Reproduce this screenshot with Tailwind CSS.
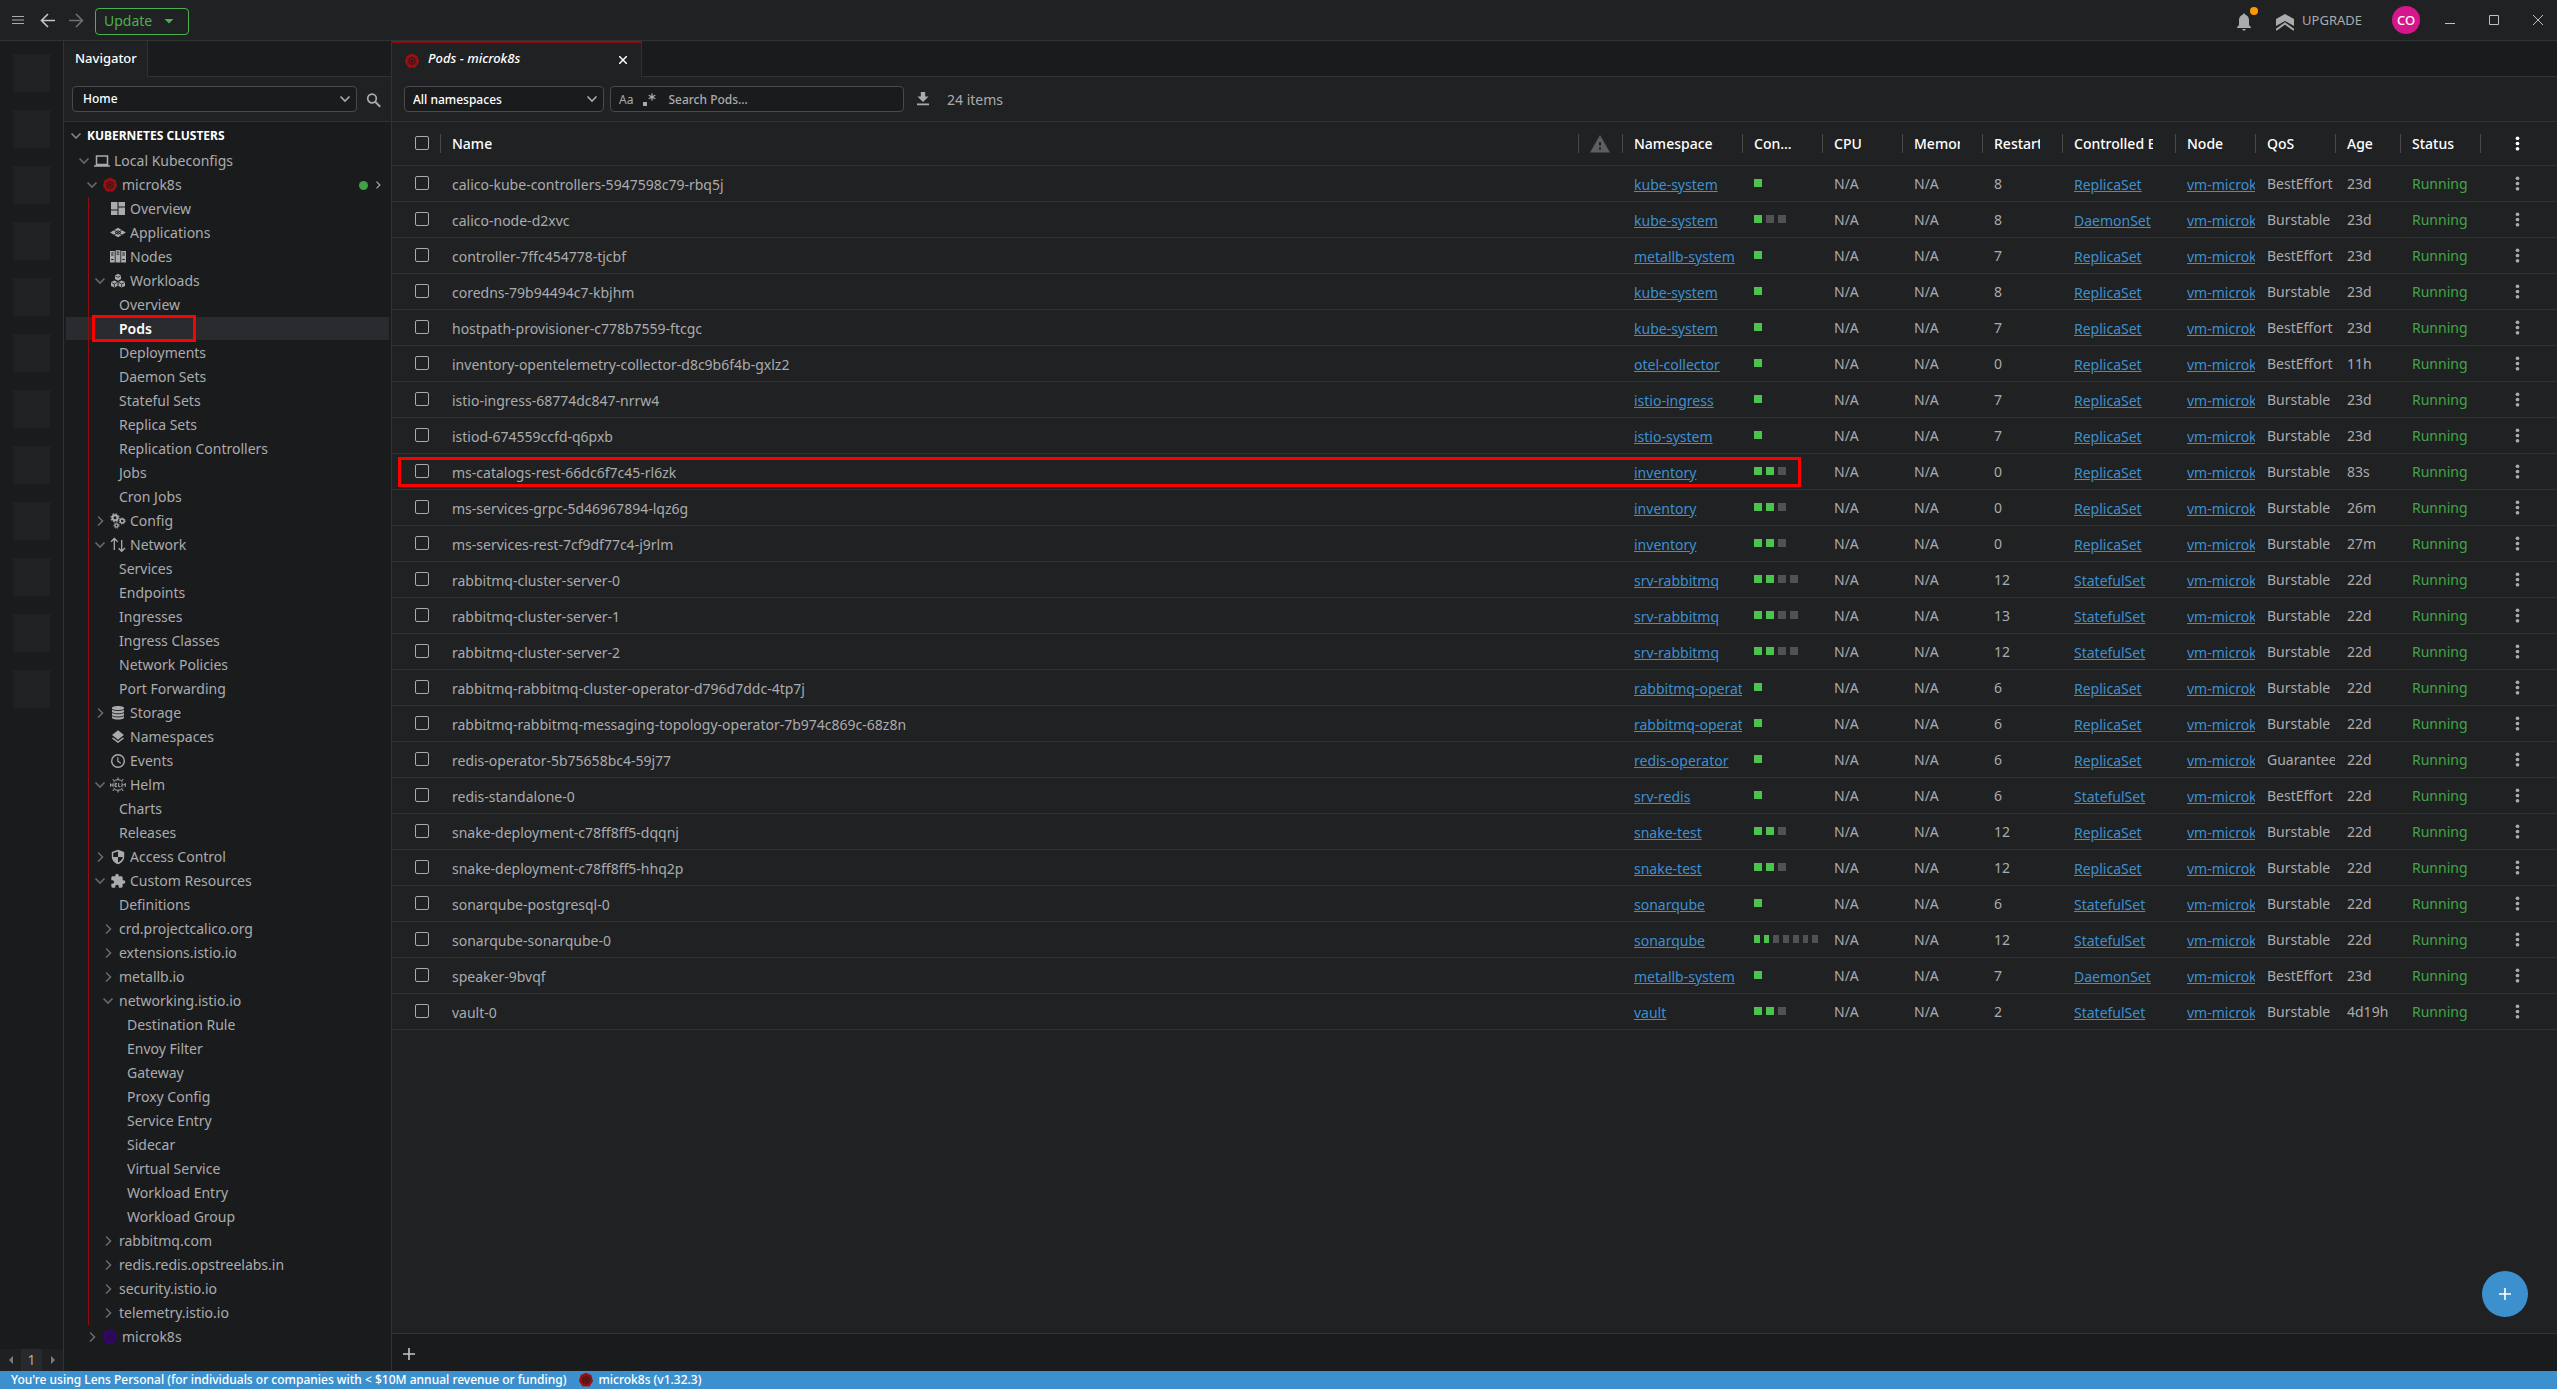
<!DOCTYPE html>
<html lang="en">
<head>
    <meta charset="UTF-8">
    <meta name="viewport" content="width=device-width, initial-scale=1.0">
    <title>Pods - microk8s</title>
    <script src="https://cdn.jsdelivr.net/npm/@tailwindcss/browser@4"></script>
</head>
<body class="bg-[#202123] text-[#aaabad] text-sm font-['Noto_Sans',sans-serif]">
    <!-- shared icons -->
    <svg class="hidden">
        <symbol id="i-down" viewBox="0 0 16 16"><path d="M3.5 5.5 8 10l4.5-4.5" fill="none" stroke="currentColor" stroke-width="1.6"/></symbol>
        <symbol id="i-right" viewBox="0 0 16 16"><path d="M6 3.500 10.500 8 6 12.500" fill="none" stroke="currentColor" stroke-width="1.6"/></symbol>
        <symbol id="i-laptop" viewBox="0 0 16 16"><path d="M2.500 3h11v8.500h-11zM0 13h16" fill="none" stroke="currentColor" stroke-width="1.5"/></symbol>
        <symbol id="i-k8s" viewBox="0 0 16 16">
            <path d="M8 1.500 12.800 3.700 14.200 9 11 13.800H5L1.800 9 3.200 3.700Z" fill="currentColor" stroke="currentColor" stroke-width="1.500" stroke-linejoin="round"/>
            <g fill="none" stroke="#1a1b1d" stroke-opacity=".7"><circle cx="8" cy="8" r="3.300"/><path d="M8 2.800v10.400M3 6.200l10 3.600M3 9.800l10-3.600M4.800 3.900l6.400 8.200M11.200 3.900l-6.400 8.200" stroke-width=".7"/></g>
        </symbol>
        <symbol id="i-dash" viewBox="0 0 16 16"><path d="M1 1h6.500v7.500H1zM8.500 1H15v4.500H8.500zM1 9.500h6.500V14H1zM8.500 6.500H15V14H8.500z" fill="currentColor"/></symbol>
        <symbol id="i-apps" viewBox="0 0 16 16"><path d="M8 2.700 15.800 7.500 8 12.300.2 7.500Z" fill="currentColor"/><path d="M4.200 5.100l7.700 4.900M11.800 5.100 4.100 10M8 5.700l2.800 1.800L8 9.300 5.200 7.500Z" stroke="#1a1b1d" stroke-width=".9" fill="none"/></symbol>
        <symbol id="i-nodes" viewBox="0 0 16 16"><path d="M0 2h4.800v11.500H0zM5.600 1.200h4.800v12.300H5.600zM11.200 2H16v11.500h-4.800z" fill="currentColor"/><path d="M1.200 4h2.400M1.200 6h2.400M1.200 10.500h2.400M6.800 3.200h2.400M6.800 5.200h2.400M12.400 4h2.400M12.400 6h2.400M12.400 10.500h2.400" stroke="#1a1b1d"/></symbol>
        <symbol id="i-work" viewBox="0 0 16 16"><path d="M8 .8l3 1.700v3.600L8 7.800 5 6.100V2.500zM4.300 7.400l3.200 1.700v3.800l-3.200 1.700L1 12.900V9.100zM11.700 7.400 15 9.100v3.800l-3.300 1.700-3.200-1.700V9.100z" fill="currentColor"/><path d="M5.500 3 8 4.300 10.500 3M1.500 9.500l2.800 1.400 2.800-1.400M8.900 9.500l2.800 1.400 2.800-1.400M4.300 11v3M11.700 11v3" stroke="#1a1b1d" stroke-width=".8" fill="none"/></symbol>
        <symbol id="i-config" viewBox="0 0 16 16"><g fill="none" stroke="currentColor"><circle cx="5" cy="4.800" r="2.500" stroke-width="2"/><circle cx="5" cy="4.800" r="4" stroke-width="1.200" stroke-dasharray="1.600 1.550"/><circle cx="12.200" cy="8" r="2" stroke-width="1.500"/><circle cx="12.200" cy="8" r="3" stroke-width="1" stroke-dasharray="1.200 1.150"/><circle cx="6.500" cy="12.500" r="1.600" stroke-width="1.400"/><circle cx="6.500" cy="12.500" r="2.600" stroke-width="1" stroke-dasharray="1.200 1.150"/></g></symbol>
        <symbol id="i-net" viewBox="0 0 16 16"><path d="M4.300 13V1.800M1 4.800l3.300-3.300 3.300 3.300M11.700 3v11.200M8.600 11.200l3.100 3.100 3.300-3.300" fill="none" stroke="currentColor" stroke-width="1.300"/></symbol>
        <symbol id="i-disk" viewBox="0 0 16 16"><path d="M2 3c0-2.700 12-2.700 12 0v9.500c0 2.700-12 2.700-12 0z" fill="currentColor"/><path d="M2 4.200c1.500 1.800 10.500 1.800 12 0M2 7.400c1.500 1.800 10.500 1.800 12 0M2 10.600c1.500 1.800 10.500 1.800 12 0" fill="none" stroke="#1a1b1d" stroke-width=".9"/></symbol>
        <symbol id="i-layers" viewBox="0 0 24 24"><path d="m11.990 18.540-7.370-5.730L3 14.070l9 7 9-7-1.630-1.270-7.380 5.740zM12 16l7.360-5.730L21 9l-9-7-9 7 1.630 1.270L12 16z" fill="currentColor"/></symbol>
        <symbol id="i-clock" viewBox="0 0 16 16"><circle cx="8" cy="8" r="6.300" fill="none" stroke="currentColor" stroke-width="1.400"/><path d="M7.800 4.300v4l3 2" fill="none" stroke="currentColor" stroke-width="1.200"/></symbol>
        <symbol id="i-helm" viewBox="0 0 16 16"><g fill="none" stroke="currentColor" stroke-width="1"><path d="M3.500 5a5.500 5.500 0 0 1 9 0M3.500 11a5.500 5.500 0 0 0 9 0M8 .5v2.300M8 13.200v2.300M2.800 2l1.500 2M13.200 2l-1.500 2M2.800 14l1.500-2M13.200 14l-1.500-2M.6 6.300v3.500M3 6.300v3.500M.6 8H3M7 6.300H5v3.400h2M5 8h1.700M8.700 6v3.700h1.800M12 9.900V6.500l1.600 1.800 1.700-1.800v3.400"/></g></symbol>
        <symbol id="i-shield" viewBox="0 0 16 16"><path d="M8 .8 14.200 3v4.500c0 3.500-2.500 6.500-6.200 7.700-3.700-1.200-6.200-4.200-6.200-7.700V3z" fill="currentColor"/><path d="M8 2.500V8H3.200V4zM8 8h4.800c-.4 2.500-2.300 4.600-4.800 5.500z" fill="#1a1b1d"/></symbol>
        <symbol id="i-puzzle" viewBox="0 0 24 24"><path d="M20.500 11H19V7c0-1.100-.9-2-2-2h-4V3.500a2.500 2.500 0 0 0-5 0V5H4c-1.100 0-2 .9-2 2v3.800h1.500a2.700 2.700 0 0 1 0 5.400H2V20c0 1.100.9 2 2 2h3.800v-1.500a2.700 2.700 0 0 1 5.400 0V22H17c1.100 0 2-.9 2-2v-4h1.500a2.500 2.500 0 0 0 0-5z" fill="currentColor"/></symbol>
        <symbol id="i-dots" viewBox="0 0 24 24"><g fill="currentColor"><circle cx="12" cy="6" r="2.100"/><circle cx="12" cy="12" r="2.100"/><circle cx="12" cy="18" r="2.100"/></g></symbol>
    </svg>

    <div class="h-screen flex flex-col overflow-hidden">
        <!-- title bar -->
        <header class="h-[41px] shrink-0 border-b border-[#303234] flex items-center justify-between">
            <div class="flex items-center pl-3">
                <button class="w-3" aria-label="Menu"><svg class="w-3 h-3" viewBox="0 0 12 12"><path d="M0 2.500h12M0 6h12M0 9.500h12" stroke="currentColor"/></svg></button>
                <button class="ml-4" aria-label="Back"><svg class="w-4 h-4" viewBox="0 0 16 16"><path d="M15 8.500H1.500M8 2 1.500 8.500 8 15" fill="none" stroke="#c4c5c7" stroke-width="1.600"/></svg></button>
                <button class="ml-3 text-[#6e7073]" aria-label="Forward"><svg class="w-4 h-4" viewBox="0 0 16 16"><path d="M1 8.500h13.500M8 2l6.500 6.500L8 15" fill="none" stroke="currentColor" stroke-width="1.600"/></svg></button>
                <button class="ml-[11px] mt-0.5 h-[27px] w-[94px] pl-2 border border-[#4caf50] rounded text-[#4caf50] flex items-center">
                    Update
                    <svg class="ml-3 w-2.5 h-2.5" viewBox="0 0 10 10"><path d="M.5 3h9L5 7.500z" fill="currentColor"/></svg>
                </button>
            </div>
            <div class="flex items-center pr-[14px]">
                <button class="relative mt-1" aria-label="Notifications">
                    <svg class="w-5 h-5" viewBox="0 0 20 20"><path d="M10 1.500c.9 0 1.300.6 1.300 1.300 2.400.7 3.700 2.700 3.700 5.200v5l2 2.300v.7H3v-.7L5 13V8c0-2.500 1.300-4.500 3.700-5.200 0-.7.4-1.300 1.300-1.300zM8.300 17h3.400c0 1-.7 1.600-1.700 1.600S8.300 18 8.300 17z" fill="currentColor"/></svg>
                    <span class="absolute -top-[5px] -right-1 w-2 h-2 rounded-full bg-[#ff9800]"></span>
                </button>
                <button class="ml-[22px] flex items-center gap-2 text-[13px]">
                    <svg class="mt-1 w-[18px] h-[18px]" viewBox="0 0 18 18"><path d="M9 1l9 5v7l-9-5-9 5V6z" fill="currentColor"/><path d="M0 17l9-6.500 9 6.500" fill="none" stroke="currentColor" stroke-width="2"/></svg>
                    UPGRADE
                </button>
                <button class="ml-[30px] w-7 h-7 rounded-full bg-[#d6168c] text-white text-[13px] font-medium">CO</button>
                <button class="ml-[25px]" aria-label="Minimize"><svg class="w-2.5 h-2.5" viewBox="0 0 10 10"><path d="M0 8.500h10" stroke="#c0c0c0"/></svg></button>
                <button class="ml-[34px]" aria-label="Maximize"><svg class="w-2.5 h-2.5" viewBox="0 0 10 10"><path d="M.5.5h9v9h-9z" fill="none" stroke="#c0c0c0"/></svg></button>
                <button class="ml-[34px]" aria-label="Close"><svg class="w-2.5 h-2.5" viewBox="0 0 10 10"><path d="M0 0l10 10M10 0 0 10" stroke="#c0c0c0"/></svg></button>
            </div>
        </header>

        <div class="flex-1 min-h-0 flex">
            <!-- hotbar -->
            <div class="w-16 shrink-0 bg-[#1a1b1d] border-r border-[#303234] flex flex-col justify-between">
                <div id="hotbar" class="pt-[13px] pl-[13px] flex flex-col gap-[18px]"></div>
                <div class="h-[22px] flex items-stretch bg-[#1f2022] text-sm">
                    <button class="w-[21px] flex items-center justify-center text-[#7a7c7e]" aria-label="Previous"><svg class="w-2 h-2" viewBox="0 0 8 8"><path d="M6 0v8L2 4z" fill="currentColor"/></svg></button>
                    <span class="w-[21px] bg-[#27292c] text-center leading-[21px]">1</span>
                    <button class="w-[21px] flex items-center justify-center text-[#7a7c7e]" aria-label="Next"><svg class="w-2 h-2" viewBox="0 0 8 8"><path d="M2 0v8l4-4z" fill="currentColor"/></svg></button>
                </div>
            </div>

            <!-- navigator -->
            <aside class="w-[328px] shrink-0 bg-[#1a1b1d] border-r border-[#303234] flex flex-col">
                <div class="h-9 shrink-0 flex">
                    <div class="w-[84px] bg-[#202123] border-r border-[#303234] pl-[11px] text-[13px] leading-[34px] font-medium text-white">Navigator</div>
                    <div class="flex-1 border-b border-[#303234]"></div>
                </div>
                <div class="h-[45px] shrink-0 bg-[#202123] border-b border-[#303234] flex items-center pl-2">
                    <div class="relative w-[285px]">
                        <select aria-label="View" class="appearance-none w-full h-[26px] bg-[#1a1b1d] border border-[#47494c] rounded pl-2.5 text-xs font-medium text-white"><option>Home</option></select>
                        <svg class="absolute right-1 top-[5px] w-4 h-4"><use href="#i-down"/></svg>
                    </div>
                    <button class="ml-[9px] mt-0.5" aria-label="Search"><svg class="w-4 h-4" viewBox="0 0 16 16"><circle cx="6" cy="6.500" r="4.300" fill="none" stroke="currentColor" stroke-width="1.700"/><path d="M9.200 9.700l5 5" stroke="currentColor" stroke-width="2"/></svg></button>
                </div>
                <nav class="flex-1 min-h-0 overflow-hidden">
                    <div class="h-[27px] flex items-center pl-1 gap-[3px]">
                        <svg class="w-4 h-4 text-[#808284]"><use href="#i-down"/></svg>
                        <h2 class="text-xs font-bold text-white">KUBERNETES CLUSTERS</h2>
                    </div>
                    <div id="tree"></div>
                </nav>
            </aside>

            <!-- main area -->
            <main class="flex-1 min-w-0 flex flex-col relative">
                <div class="h-9 shrink-0 flex bg-[#1a1b1d]">
                    <div class="w-[250px] bg-[#202123] border-t-2 border-t-[#8e0e10] border-r border-r-[#303234] flex items-center pl-3 pr-3.5">
                        <svg class="w-4 h-4 mt-0.5 text-[#a01012]"><use href="#i-k8s"/></svg>
                        <span class="ml-2 mb-1 flex-1 text-[13px] italic font-medium text-white">Pods - microk8s</span>
                        <button class="text-white" aria-label="Close tab"><svg class="w-2 h-2" viewBox="0 0 8 8"><path d="M0 0l8 8M8 0 0 8" stroke="currentColor" stroke-width="1.500"/></svg></button>
                    </div>
                    <div class="flex-1 border-b border-[#303234]"></div>
                </div>
                <div class="h-[45px] shrink-0 border-b border-[#303234] flex items-center pl-3">
                    <div class="relative w-[200px]">
                        <select aria-label="Namespace" class="appearance-none w-full h-[26px] pt-px bg-[#1a1b1d] border border-[#47494c] rounded pl-2 text-xs font-medium text-white"><option>All namespaces</option></select>
                        <svg class="absolute right-1 top-[5px] w-4 h-4"><use href="#i-down"/></svg>
                    </div>
                    <div class="ml-1.5 w-[294px] h-[26px] pt-px bg-[#1a1b1d] border border-[#47494c] rounded flex items-center pl-2">
                        <button class="text-xs" aria-label="Match case">Aa</button>
                        <button class="ml-2.5" aria-label="Use regular expression"><svg class="w-3.5 h-3.5" viewBox="0 0 14 14"><path d="M0 9h4v4H0z" fill="currentColor"/><path d="M9 .5v7M5.700 2.300l6.600 3.500M12.300 2.300 5.700 5.800" stroke="currentColor" stroke-width="1.300"/></svg></button>
                        <input type="text" aria-label="Search pods" placeholder="Search Pods..." class="ml-[11px] flex-1 min-w-0 bg-transparent outline-none text-xs font-medium placeholder:text-[#aaabad]">
                    </div>
                    <button class="ml-3" aria-label="Download"><svg class="w-3.5 h-3.5" viewBox="0 0 14 14"><path d="M4.800 0h4.400v4.500h3.300L7 10 1.500 4.500h3.300zM1 11.500h12v1.800H1z" fill="currentColor"/></svg></button>
                    <span class="ml-[17px] pt-0.5">24 items</span>
                </div>

                <div class="flex-1 min-h-0 overflow-hidden">
                    <table class="w-full table-fixed border-separate border-spacing-0 whitespace-nowrap [&_td]:border-b [&_th]:border-b [&_td]:border-[#2f3133] [&_th]:border-[#2f3133]">
                        <colgroup>
                            <col class="w-12"><col><col class="w-11"><col class="w-[120px]"><col class="w-20"><col class="w-20"><col class="w-20"><col class="w-20"><col class="w-[113px]"><col class="w-20"><col class="w-20"><col class="w-[65px]"><col class="w-20"><col class="w-[77px]">
                        </colgroup>
                        <thead>
                            <tr id="head"></tr>
                        </thead>
                        <tbody id="pods"></tbody>
                    </table>
                </div>

                <button class="absolute right-[29px] bottom-[54px] w-[46px] h-[46px] rounded-full bg-[#3d90ce] text-white flex items-center justify-center" aria-label="Create resource">
                    <svg class="w-3 h-3" viewBox="0 0 12 12"><path d="M6 0v12M0 6h12" stroke="currentColor" stroke-width="1.600"/></svg>
                </button>

                <!-- dock -->
                <div class="h-[38px] shrink-0 bg-[#1a1b1d] border-t border-[#303234] flex items-center pl-[11px]">
                    <button class="mt-0.5" aria-label="New tab"><svg class="w-3 h-3" viewBox="0 0 12 12"><path d="M6 0v12M0 6h12" stroke="#c4c5c7" stroke-width="1.600"/></svg></button>
                </div>
            </main>
        </div>

        <footer class="h-[18px] shrink-0 bg-[#3d90ce] text-white text-xs leading-[18px] font-medium flex items-center pl-[11px]">
            <span>You're using Lens Personal (for individuals or companies with &lt; $10M annual revenue or funding)</span>
            <svg class="ml-3 w-4 h-4 text-[#a01012]"><use href="#i-k8s"/></svg>
            <span class="ml-1">microk8s (v1.32.3)</span>
        </footer>
    </div>

    <script>
        // level, chevron (d = open, r = closed, '' = none), icon, label
        const tree = [
            [0, 'd', 'laptop', 'Local Kubeconfigs'],
            [1, 'd', 'k8s', 'microk8s'],
            [2, '', 'dash', 'Overview'],
            [2, '', 'apps', 'Applications'],
            [2, '', 'nodes', 'Nodes'],
            [2, 'd', 'work', 'Workloads'],
            [3, '', '', 'Overview'],
            [3, '', '', 'Pods'],
            [3, '', '', 'Deployments'],
            [3, '', '', 'Daemon Sets'],
            [3, '', '', 'Stateful Sets'],
            [3, '', '', 'Replica Sets'],
            [3, '', '', 'Replication Controllers'],
            [3, '', '', 'Jobs'],
            [3, '', '', 'Cron Jobs'],
            [2, 'r', 'config', 'Config'],
            [2, 'd', 'net', 'Network'],
            [3, '', '', 'Services'],
            [3, '', '', 'Endpoints'],
            [3, '', '', 'Ingresses'],
            [3, '', '', 'Ingress Classes'],
            [3, '', '', 'Network Policies'],
            [3, '', '', 'Port Forwarding'],
            [2, 'r', 'disk', 'Storage'],
            [2, '', 'layers', 'Namespaces'],
            [2, '', 'clock', 'Events'],
            [2, 'd', 'helm', 'Helm'],
            [3, '', '', 'Charts'],
            [3, '', '', 'Releases'],
            [2, 'r', 'shield', 'Access Control'],
            [2, 'd', 'puzzle', 'Custom Resources'],
            [3, '', '', 'Definitions'],
            [3, 'r', '', 'crd.projectcalico.org'],
            [3, 'r', '', 'extensions.istio.io'],
            [3, 'r', '', 'metallb.io'],
            [3, 'd', '', 'networking.istio.io'],
            [4, '', '', 'Destination Rule'],
            [4, '', '', 'Envoy Filter'],
            [4, '', '', 'Gateway'],
            [4, '', '', 'Proxy Config'],
            [4, '', '', 'Service Entry'],
            [4, '', '', 'Sidecar'],
            [4, '', '', 'Virtual Service'],
            [4, '', '', 'Workload Entry'],
            [4, '', '', 'Workload Group'],
            [3, 'r', '', 'rabbitmq.com'],
            [3, 'r', '', 'redis.redis.opstreelabs.in'],
            [3, 'r', '', 'security.istio.io'],
            [3, 'r', '', 'telemetry.istio.io'],
            [1, 'r', 'k8s', 'microk8s'],
        ];
        const indent = ['pl-3', 'pl-5', 'pl-7', 'pl-9', 'pl-11'];

        function treeRow([level, chevron, icon, label], index) {
            const selected = label === 'Pods';
            const iconColor = icon !== 'k8s' ? '' : index === 1 ? 'text-[#a01012]' : 'text-[#3a0078]';
            return `
                <a href="#" class="relative h-6 flex items-center ${indent[level]} ${selected ? 'text-white font-semibold' : ''}">
                    ${selected ? '<span class="absolute inset-x-0.5 top-0 bottom-px bg-[#2a2b2e] -z-10"></span>' : ''}
                    <span class="w-4 h-4 text-[#66686b]">${chevron ? `<svg class="w-4 h-4"><use href="#${chevron === 'd' ? 'i-down' : 'i-right'}"/></svg>` : ''}</span>
                    ${icon ? `<svg class="ml-0.5 w-4 h-4 ${iconColor}"><use href="#i-${icon}"/></svg><span class="ml-1">${label}</span>` : `<span class="ml-[3px]">${label}</span>`}
                    ${index === 1 ? '<span class="ml-auto w-[9px] h-[9px] rounded-full bg-[#43a047]"></span><svg class="ml-1 mr-[7px] w-3 h-3"><use href="#i-right"/></svg>' : ''}
                    ${selected ? '<span class="absolute left-7 -top-0.5 w-[104px] h-[27px] border-3 border-[#ff0000]"></span>' : ''}
                </a>`;
        }

        document.getElementById('tree').innerHTML = `
            <div class="relative z-0">
                ${tree.slice(0, 2).map(treeRow).join('')}
                <div class="relative">
                    <span class="absolute left-6 inset-y-0 w-px bg-[#8e0e10]"></span>
                    ${tree.slice(2, -1).map((r) => treeRow(r, 2)).join('')}
                </div>
                ${treeRow(tree[tree.length - 1], 99)}
            </div>`;

        document.getElementById('hotbar').innerHTML = '<div class="w-[37px] h-[38px] bg-[#202123]"></div>'.repeat(12);

        const warning = '<svg class="w-5 h-[18px] text-[#5c5f62]" viewBox="0 0 20 18"><path d="M10 0l10 17.500H0z" fill="currentColor"/><path d="M9 7h2v3.500H9zM9 12.500h2v2H9z" fill="#202123"/></svg>';
        const columns = ['Name', warning, 'Namespace', 'Con...', 'CPU', 'Memory', 'Restarts', 'Controlled By', 'Node', 'QoS', 'Age', 'Status'];
        const box = 'appearance-none block w-3.5 h-3.5 ml-[23px] border border-[#aaabad] rounded-xs';
        const dots = '<svg class="w-[21px] h-[21px]"><use href="#i-dots"/></svg>';

        document.getElementById('head').innerHTML = `
            <th class="h-11 p-0 pb-0.5"><input type="checkbox" aria-label="Select all pods" class="${box}"></th>
            ${columns.map((c) => `
            <th class="p-0 font-medium text-white text-left">
                <div class="flex items-center pr-[22px]">
                    <span class="w-px h-[19px] mr-[11px] shrink-0 bg-[#47494c]"></span>
                    <span class="${c === warning ? '' : 'overflow-hidden'}">${c}</span>
                </div>
            </th>`).join('')}
            <th class="p-0 text-white">
                <div class="flex items-center"><span class="w-px h-[19px] mr-[26px] bg-[#47494c]"></span><button aria-label="Columns" class="block">${dots}</button></div>
            </th>`;

        // name, namespace, containers ready/total, restarts, owner, qos, age
        const pods = [
            ['calico-kube-controllers-5947598c79-rbq5j', 'kube-system', 1, 1, 8, 'ReplicaSet', 'BestEffort', '23d'],
            ['calico-node-d2xvc', 'kube-system', 1, 3, 8, 'DaemonSet', 'Burstable', '23d'],
            ['controller-7ffc454778-tjcbf', 'metallb-system', 1, 1, 7, 'ReplicaSet', 'BestEffort', '23d'],
            ['coredns-79b94494c7-kbjhm', 'kube-system', 1, 1, 8, 'ReplicaSet', 'Burstable', '23d'],
            ['hostpath-provisioner-c778b7559-ftcgc', 'kube-system', 1, 1, 7, 'ReplicaSet', 'BestEffort', '23d'],
            ['inventory-opentelemetry-collector-d8c9b6f4b-gxlz2', 'otel-collector', 1, 1, 0, 'ReplicaSet', 'BestEffort', '11h'],
            ['istio-ingress-68774dc847-nrrw4', 'istio-ingress', 1, 1, 7, 'ReplicaSet', 'Burstable', '23d'],
            ['istiod-674559ccfd-q6pxb', 'istio-system', 1, 1, 7, 'ReplicaSet', 'Burstable', '23d'],
            ['ms-catalogs-rest-66dc6f7c45-rl6zk', 'inventory', 2, 3, 0, 'ReplicaSet', 'Burstable', '83s'],
            ['ms-services-grpc-5d46967894-lqz6g', 'inventory', 2, 3, 0, 'ReplicaSet', 'Burstable', '26m'],
            ['ms-services-rest-7cf9df77c4-j9rlm', 'inventory', 2, 3, 0, 'ReplicaSet', 'Burstable', '27m'],
            ['rabbitmq-cluster-server-0', 'srv-rabbitmq', 2, 4, 12, 'StatefulSet', 'Burstable', '22d'],
            ['rabbitmq-cluster-server-1', 'srv-rabbitmq', 2, 4, 13, 'StatefulSet', 'Burstable', '22d'],
            ['rabbitmq-cluster-server-2', 'srv-rabbitmq', 2, 4, 12, 'StatefulSet', 'Burstable', '22d'],
            ['rabbitmq-rabbitmq-cluster-operator-d796d7ddc-4tp7j', 'rabbitmq-operator', 1, 1, 6, 'ReplicaSet', 'Burstable', '22d'],
            ['rabbitmq-rabbitmq-messaging-topology-operator-7b974c869c-68z8n', 'rabbitmq-operator', 1, 1, 6, 'ReplicaSet', 'Burstable', '22d'],
            ['redis-operator-5b75658bc4-59j77', 'redis-operator', 1, 1, 6, 'ReplicaSet', 'Guaranteed', '22d'],
            ['redis-standalone-0', 'srv-redis', 1, 1, 6, 'StatefulSet', 'BestEffort', '22d'],
            ['snake-deployment-c78ff8ff5-dqqnj', 'snake-test', 2, 3, 12, 'ReplicaSet', 'Burstable', '22d'],
            ['snake-deployment-c78ff8ff5-hhq2p', 'snake-test', 2, 3, 12, 'ReplicaSet', 'Burstable', '22d'],
            ['sonarqube-postgresql-0', 'sonarqube', 1, 1, 6, 'StatefulSet', 'Burstable', '22d'],
            ['sonarqube-sonarqube-0', 'sonarqube', 2, 7, 12, 'StatefulSet', 'Burstable', '22d'],
            ['speaker-9bvqf', 'metallb-system', 1, 1, 7, 'DaemonSet', 'BestEffort', '23d'],
            ['vault-0', 'vault', 2, 3, 2, 'StatefulSet', 'Burstable', '4d19h'],
        ];

        const cell = (v) => `<td class="p-0 pl-3 overflow-hidden">${v}</td>`;
        const link = (v) => `<td class="p-0 pl-3 pt-0.5 overflow-hidden"><a href="#" class="text-[#3d90ce] underline">${v}</a></td>`;

        function bricks(ready, total) {
            let html = '';
            for (let i = 0; i < total; i++) {
                html += i < ready ? '<span class="w-2 h-2 bg-[#4ac44d]"></span>' : '<span class="w-2 h-2 bg-[#4f5153]"></span>';
            }
            return `<td class="p-0 pl-3 pr-1 pb-0.5"><div class="flex gap-1">${html}</div></td>`;
        }

        document.getElementById('pods').innerHTML = pods.map(([name, ns, ready, total, restarts, owner, qos, age]) => `
            <tr class="relative">
                <td class="p-0 pb-0.5 h-9">
                    <input type="checkbox" aria-label="Select ${name}" class="${box}">
                    ${name.startsWith('ms-catalogs') ? '<span class="absolute left-1.5 right-[756px] top-[3px] h-[30px] border-3 border-[#ff0000]"></span>' : ''}
                </td>
                <td class="p-0 pl-3 pt-0.5 overflow-hidden">${name}</td>
                <td class="p-0"></td>
                ${link(ns)}
                ${bricks(ready, total)}
                ${cell('N/A')}
                ${cell('N/A')}
                ${cell(restarts)}
                ${link(owner)}
                ${link('vm-microk8s')}
                ${cell(qos)}
                ${cell(age)}
                <td class="p-0 pl-3 text-[#43a547]">Running</td>
                <td class="p-0 pl-[27px]"><button aria-label="Actions for ${name}" class="block">${dots}</button></td>
            </tr>`).join('');
    </script>
</body>
</html>
